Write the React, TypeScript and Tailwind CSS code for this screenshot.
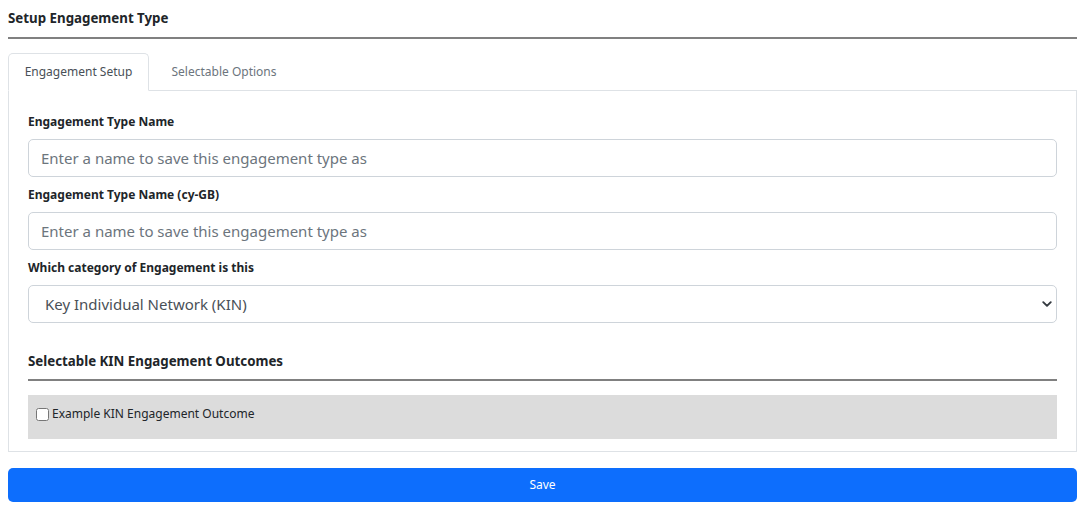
import { useState } from 'react';

const font = { fontFamily: '"Noto Sans", "Open Sans", sans-serif' };

function Field({ label, children }: { label: string; children: React.ReactNode }) {
  return (
    <div className="mb-[9px]">
      <label className="mb-[8px] block text-[12px] font-bold leading-[18px] text-[#212529]">{label}</label>
      {children}
    </div>
  );
}

const inputCls =
  'h-[38px] w-full rounded-[5px] border border-[#ced4da] px-3 text-[15px] placeholder:text-[#6c757d] focus:outline-none';

export default function App() {
  const [tab, setTab] = useState<'setup' | 'options'>('setup');
  const [checked, setChecked] = useState(false);

  return (
    <div style={font} className="bg-white pb-[5px] pl-2 pr-[2px] pt-[9px] text-[#212529]">
      <h5 className="text-[13.3px] font-bold leading-[18px]">Setup Engagement Type</h5>
      <hr className="mt-[10px] border-0 border-t-2 border-[#808080]" />

      {/* tabs */}
      <div className="mt-[14px] flex border-b border-[#dee2e6]">
        <button
          onClick={() => setTab('setup')}
          className={`-mb-px h-[38px] w-[141px] rounded-t-[5px] border text-[12px] ${
            tab === 'setup' ? 'border-[#dee2e6] border-b-white bg-white text-[#495057]' : 'border-transparent text-[#6c757d]'
          }`}
        >
          Engagement Setup
        </button>
        <button
          onClick={() => setTab('options')}
          className={`-mb-px h-[38px] w-[150px] rounded-t-[5px] border text-[12px] ${
            tab === 'options' ? 'border-[#dee2e6] border-b-white bg-white text-[#495057]' : 'border-transparent text-[#6c757d]'
          }`}
        >
          Selectable Options
        </button>
      </div>

      <div className="border border-t-0 border-[#dee2e6] px-[19px] pb-[12px] pt-[22px]">
        <Field label="Engagement Type Name">
          <input placeholder="Enter a name to save this engagement type as" className={inputCls} />
        </Field>
        <Field label="Engagement Type Name (cy-GB)">
          <input placeholder="Enter a name to save this engagement type as" className={inputCls} />
        </Field>
        <Field label="Which category of Engagement is this">
          <div className="relative">
            <select className="h-[38px] w-full appearance-none rounded-[5px] border border-[#ced4da] bg-white pl-4 text-[15px] text-[#495057] focus:outline-none">
              <option>Key Individual Network (KIN)</option>
            </select>
            <svg
              className="pointer-events-none absolute right-[5px] top-[14px] h-[10px] w-[10px]"
              viewBox="0 0 16 16"
              fill="none"
              stroke="#343a40"
              strokeWidth="3"
              strokeLinecap="round"
              strokeLinejoin="round"
            >
              <path d="M2 5l6 6 6-6" />
            </svg>
          </div>
        </Field>

        <h6 className="mt-[29px] text-[13.3px] font-bold leading-[18px]">Selectable KIN Engagement Outcomes</h6>
        <hr className="mt-[9px] border-0 border-t-2 border-[#808080]" />

        <div className="mt-[14px] flex h-[44px] items-start bg-[#dcdcdc] pl-[8px] pt-[10px]">
          <label className="flex items-center gap-[3px] text-[12px] leading-[18px] text-[#212529]">
            <input
              type="checkbox"
              checked={checked}
              onChange={(e) => setChecked(e.target.checked)}
              className="h-[13px] w-[13px]"
            />
            Example KIN Engagement Outcome
          </label>
        </div>
      </div>

      <button className="mt-[16px] h-[34px] w-full rounded-[5px] bg-[#0d6efd] text-[12px] text-white">Save</button>
    </div>
  );
}
